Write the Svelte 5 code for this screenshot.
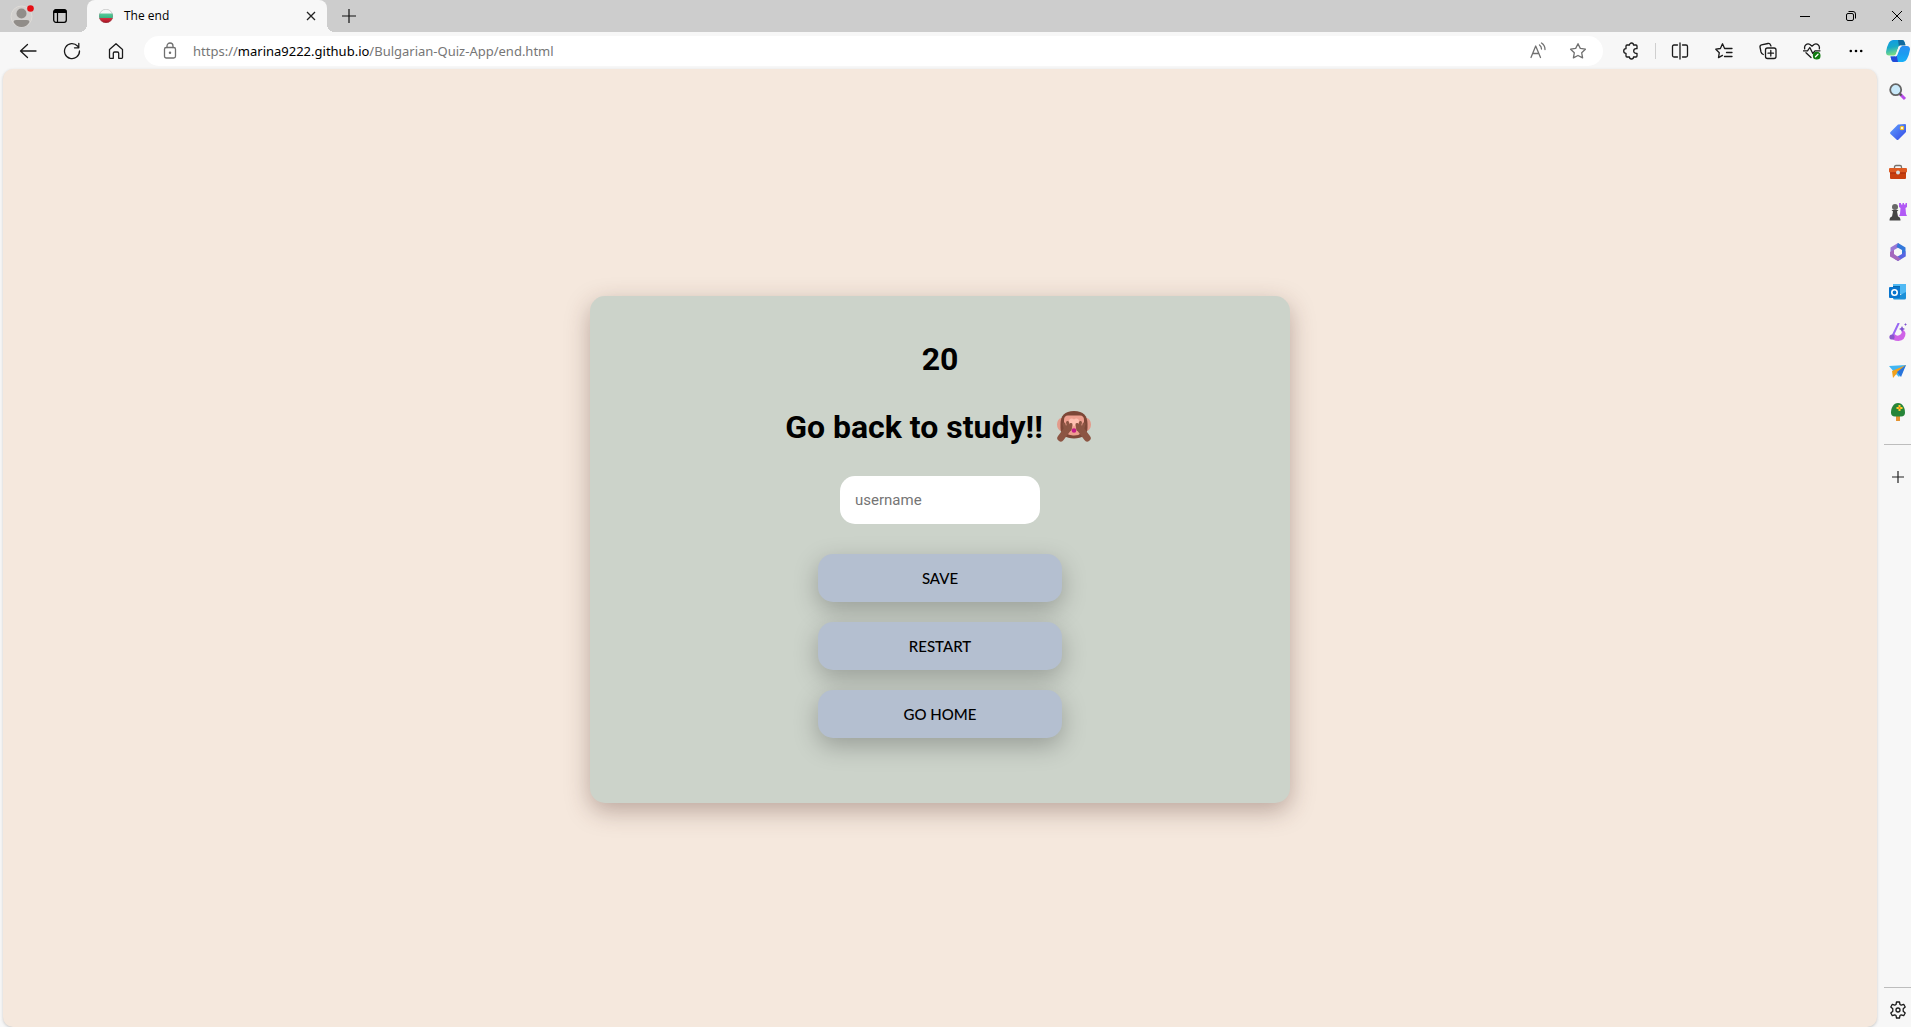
<script>
  let username = $state('');
  const actions = ['SAVE', 'RESTART', 'GO HOME'];
</script>

<svelte:head><title>The end</title></svelte:head>

<div class="browser">
  <header class="tabs">
    <button class="tool profile" aria-label="Profile">
      <svg width="24" height="26" viewBox="0 0 24 26">
        <circle cx="11.500" cy="13.500" r="10.500" fill="#d2d0ce" stroke="#dedbd7" />
        <circle cx="11.500" cy="10.500" r="5" fill="#918d89" />
        <path d="M3.500 19q0-2 2.500-2h11q2.500 0 2.500 2c-1.500 3-4.500 5-8 5s-6.500-2-8-5z" fill="#918d89" />
        <circle cx="20.500" cy="5.500" r="3.300" fill="#e60e14" />
      </svg>
    </button>
    <button class="tool workspace" aria-label="Tab actions">
      <svg width="16" height="16" viewBox="0 0 16 16">
        <rect x="1.700" y="1.700" width="12.600" height="12.600" rx="2.200" fill="none" stroke="#000" stroke-width="1.300" />
        <path d="M1.500 5V3.500a2 2 0 0 1 2-2h9a2 2 0 0 1 2 2V5z" />
        <path d="M5.500 5v9" stroke="#000" stroke-width="1.200" />
      </svg>
    </button>
    <div class="tab">
      <svg width="14" height="14" viewBox="0 0 14 14">
        <defs><clipPath id="ball"><circle cx="7" cy="7" r="7" /></clipPath>
          <linearGradient id="gloss" x2="0" y2="1"><stop stop-color="#fff" stop-opacity=".5" /><stop offset=".5" stop-color="#fff" stop-opacity=".2" /><stop offset="1" stop-opacity=".25" /></linearGradient></defs>
        <g clip-path="url(#ball)">
          <rect width="14" height="5" fill="#f2f2f2" /><rect y="4.500" width="14" height="5" fill="#18b070" /><rect y="9" width="14" height="5" fill="#dc1024" />
          <rect width="14" height="14" fill="url(#gloss)" />
        </g>
        <circle cx="7" cy="7" r="6.700" fill="none" stroke="#777" stroke-opacity=".5" stroke-width=".6" />
      </svg>
      <span class="tab-title">The end</span>
      <button class="tab-close" aria-label="Close tab">
        <svg width="10" height="10" viewBox="0 0 10 10"><path d="M1 1l8 8M9 1L1 9" fill="none" stroke="#222" stroke-width="1.300" /></svg>
      </button>
    </div>
    <button class="tool newtab" aria-label="New tab">
      <svg width="14" height="14" viewBox="0 0 14 14"><path d="M7 0v14M0 7h14" stroke="#111" fill="none" stroke-width="1.200" /></svg>
    </button>
    <div class="window-controls">
      <button aria-label="Minimize"><svg width="10" height="10" viewBox="0 0 10 10"><path d="M0 5.500h10" stroke="#000" /></svg></button>
      <button aria-label="Restore"><svg width="10" height="10" viewBox="0 0 10 10"><rect x=".5" y="2.500" width="7" height="7" rx="1.500" fill="none" stroke="#000" /><path d="M2.500.5H7a2.500 2.500 0 0 1 2.500 2.500v4.500" fill="none" stroke="#000" /></svg></button>
      <button class="last" aria-label="Close"><svg width="10" height="10" viewBox="0 0 10 10"><path d="M0 0l10 10M10 0L0 10" stroke="#000" /></svg></button>
    </div>
  </header>

  <nav class="toolbar" aria-label="Browser toolbar">
    <button class="tool" aria-label="Back"><svg class="line" width="18" height="18" viewBox="0 0 18 18"><path d="M17 9H1.500M8.500 2.500L1.500 9l7 6.500" /></svg></button>
    <button class="tool" aria-label="Refresh"><svg class="line" width="18" height="18" viewBox="0 0 18 18"><path d="M16.500 9A7.500 7.500 0 1 1 14.500 4L15.500 5.500M15.800 1.500v4.300h-4.300" /></svg></button>
    <button class="tool" aria-label="Home"><svg class="line" width="18" height="18" viewBox="0 0 18 18"><path d="M2.500 7.500L9 1.800l6.500 5.700v8q0 .8-.8.8h-3v-5q0-1.300-1.300-1.300H7.600q-1.300 0-1.300 1.300v5h-3q-.8 0-.8-.8z" /></svg></button>
    <div class="address">
      <svg class="line lock" width="14" height="18" viewBox="0 0 14 18"><rect x="1.500" y="5.500" width="11" height="10.500" rx="1.800" /><path d="M4 5.500V4a3 3 0 0 1 6 0v1.500" /><circle cx="7" cy="10.800" r=".6" /></svg>
      <div class="url"><span>https://</span><strong>marina9222.github.io</strong><span>/Bulgarian-Quiz-App/end.html</span></div>
      <button class="read" aria-label="Read aloud"><svg class="line" width="18" height="18" viewBox="0 0 18 18"><path d="M2 15.500L6.700 4l4.800 11.500M3.700 11.500h6M10.500 3q2 1.500 2 4M12.500 1q3.500 2.200 3.500 6.500" /></svg></button>
      <button class="star" aria-label="Add to favorites"><svg class="line" width="18" height="18" viewBox="0 0 18 18"><path d="M9 1.700l2.300 4.700 5.100.8-3.700 3.600.9 5.100L9 13.500l-4.600 2.400.9-5.100-3.700-3.600 5.100-.8z" /></svg></button>
    </div>
    <button class="tool" aria-label="Extensions"><svg class="line" width="18" height="18" viewBox="0 0 18 18"><path d="M5 3h2.500a2 2 0 0 1 4 0H14q1 0 1 1v2.700h-1a2.300 2.300 0 0 0 0 4.600h1V14q0 1-1 1h-2.500a2 2 0 0 1-4 0H5q-1 0-1-1v-2.700a2.300 2.300 0 0 1 0-4.600V4q0-1 1-1z" /></svg></button>
    <span class="divider"></span>
    <button class="tool" aria-label="Split screen"><svg class="line" width="18" height="18" viewBox="0 0 18 18"><path d="M6.500 3H3Q1.500 3 1.500 4.500v9Q1.500 15 3 15h3.500M11.500 3H15q1.500 0 1.500 1.500v9q0 1.500-1.500 1.500h-3.500M9 1v16" /></svg></button>
    <button class="tool" aria-label="Favorites"><svg class="line" width="18" height="18" viewBox="0 0 18 18"><path d="M11 6.500H9.600L7.500 1.800 5.400 6.500l-4.600.7 3.500 3.500-.8 4.900 4-2.200M11 6.500h6M11.500 10.500H17M9.500 14.500H17" /></svg></button>
    <button class="tool" aria-label="Collections"><svg class="line" width="18" height="18" viewBox="0 0 18 18"><rect x="6.500" y="6" width="10.500" height="10.500" rx="2" /><path d="M11.800 8.500v5.500M9 11.200h5.500M4.300 12.500Q2.500 11.800 2 10L1 5Q.7 3.200 2.500 2.800L9 1.500q2-.3 2.500 1.600L12 4" /></svg></button>
    <button class="tool" aria-label="Browser essentials"><svg class="line" width="18" height="18" viewBox="0 0 18 18"><path d="M1.700 6.800C.9 3.500 4 .8 7 2.500l2 1.700 2-1.700c3-1.700 6.100 1 5.300 4.300M3 10.800L8 15.500M.5 8.800h4L6.800 5.500l3 6L12 8.800h5" /><circle class="ok" cx="13.700" cy="13.700" r="3.200" /><path class="tick" d="M12.500 14.700l2.500-2.500" /></svg></button>
    <button class="tool" aria-label="More"><svg width="14" height="4" viewBox="0 0 14 4"><circle cx="1.800" cy="2" r="1.300" /><circle cx="7" cy="2" r="1.300" /><circle cx="12.200" cy="2" r="1.300" /></svg></button>
    <button class="copilot" aria-label="Copilot">
      <svg width="24" height="24" viewBox="0 0 24 24">
        <defs><linearGradient id="cpa" x2=".3" y2="1"><stop stop-color="#1199e8" /><stop offset=".5" stop-color="#18a9c9" /><stop offset="1" stop-color="#7ee080" /></linearGradient><linearGradient id="cpb" x2="0" y2="1"><stop stop-color="#2a8ff5" /><stop offset=".5" stop-color="#1a9cf0" /><stop offset="1" stop-color="#18b0f8" /></linearGradient></defs>
        <path d="M7 1h9q2 0 2.500 2L19.500 6H15q-2 0-2.500 2L10 15q-.5 1.500-2 1.500H3Q0 16.500 0 13 1 7 3 3.500 4.500 1 7 1z" fill="url(#cpa)" />
        <path d="M12 1h4q2 0 2.500 2l1 3.500H15q-1.500 0-2 1.500z" fill="#126a9e" />
        <path d="M17 23H8q-2 0-2.500-2L4.500 17.500H8q2 0 2.500-2L14 9q.5-2 2.500-2H21q3 0 3 3.500-1 6-3 9.500-1.500 3-4 3z" fill="url(#cpb)" />
        <path d="M12 23H8q-2 0-2.500-2L4.500 17.500H8q2 0 2.500-2z" fill="#2348d8" />
        <path d="M12.700 7.500q.5-1 1.800-1L16 7q-1.500.3-2 2l-2.500 6.500q-.7 2-2 2L8 16.700q1.500-.2 2-1.700z" fill="#f7f7f7" />
      </svg>
    </button>
  </nav>

  <div class="body">
    <main>
      <section class="card">
        <h1>20</h1>
        <h1>Go back to study!!
          <svg class="monkey" width="34" height="32" viewBox="0 0 34 32" role="img" aria-label="See-no-evil monkey">
            <ellipse cx="4.500" cy="13.500" rx="4.500" ry="6.500" fill="#e39b8b" /><ellipse cx="29.500" cy="13.500" rx="4.500" ry="6.500" fill="#e39b8b" />
            <path d="M17 0C7.500 0 3.500 5 3.500 13v4C3.500 24 9 27.500 17 27.500S30.500 24 30.500 17v-4C30.500 5 26.500 0 17 0z" fill="#7d4737" />
            <path d="M11 4.500h12q4 0 4 4.500v3q0 3-3 4.500V22q-2 2.500-7 2.500S10 24 10 22v-5.500Q7 15 7 12V9q0-4.500 4-4.500z" fill="#ee9f8f" />
            <path d="M17 8.500c-2-2-5-1-5 1.500 0 3 4 3 5 6 1-3 5-3 5-6 0-2.500-3-3.500-5-1.500z" fill="#ffc0b1" />
            <circle cx="17" cy="19.500" r="2.300" fill="#c51b87" />
            <path d="M3.800 27L11 17.500M30.200 27L23 17.500" fill="none" stroke="#8c5543" stroke-width="7" stroke-linecap="round" />
            <path d="M7 13l1.500 6M10.500 11.500l1.500 6M14 13.500l-1 5M27 13l-1.500 6M23.500 11.500l-1.500 6M20 13.500l1 5" fill="none" stroke="#8c5543" stroke-width="3" stroke-linecap="round" />
          </svg>
        </h1>
        <form onsubmit={(e) => e.preventDefault()}>
          <input type="text" aria-label="username" placeholder="username" bind:value={username} />
          {#each actions as action}
            <button class="action" type="button">{action}</button>
          {/each}
        </form>
      </section>
    </main>

    <aside aria-label="Sidebar">
      <button aria-label="Search"><svg width="18" height="18" viewBox="0 0 18 18"><path d="M11 11l5 5" stroke="#b74bea" stroke-width="3" /><path d="M10 10l2.500 2.500" stroke="#555" stroke-width="2" /><circle cx="6.700" cy="6.700" r="5.500" fill="#c9e9fa" stroke="#646464" stroke-width="1.800" /></svg></button>
      <button aria-label="Shopping"><svg width="18" height="18" viewBox="0 0 18 18"><defs><linearGradient id="tg" x2="1" y2="1"><stop stop-color="#62a2ff" /><stop offset="1" stop-color="#3448e5" /></linearGradient></defs><path d="M9 1.500L16 1q1 0 1 1v7l-7.500 7.500q-1 1-2 0L1.500 11q-1-1 0-2z" fill="url(#tg)" /><circle cx="13" cy="5" r="1.700" fill="#fff" stroke="#f5c12a" stroke-width="1.200" /></svg></button>
      <button aria-label="Tools"><svg width="18" height="18" viewBox="0 0 18 18"><path d="M5.500 6V4q0-1.500 1.500-1.500h4q1.500 0 1.500 1.500v2" fill="none" stroke="#77716c" stroke-width="1.300" /><rect x="1" y="5" width="16" height="11" rx="1" fill="#c8400f" /><rect y="5" width="18" height="4.500" rx="1" fill="#dd5a22" /><path d="M1 10h16" stroke="#a62b0c" /><circle cx="9" cy="9.500" r="2" fill="#d8e1e2" /></svg></button>
      <button aria-label="Games"><svg width="18" height="18" viewBox="0 0 18 18"><path d="M10 0h2v1.500h1.500V0H15v1.500h1.500V0H18v4l-1.500 1 .5 6 1 2h-8l1-2 .5-6L10 4z" fill="#b15af5" /><circle cx="6" cy="4" r="3" fill="#686868" /><path d="M2.500 7h7L8 8.500l1 5q2.500.5 2.500 4H.5q0-3.500 2.500-4l1-5z" fill="#454545" /></svg></button>
      <button aria-label="Microsoft 365"><svg width="18" height="18" viewBox="0 0 18 18"><path d="M9 0L1.500 4.500v8L5 11V7l7-4z" fill="#9a79d5" /><path d="M9 0l7.500 4.500v9L13 11V7L7.500 4z" fill="#3478da" /><path d="M16.500 8v5.500L9 18l-4-2.500 8-4.500z" fill="#5964e1" /><path d="M1 9v4.500L9 18l3-2-7-5V7z" fill="#a467bd" /></svg></button>
      <button aria-label="Outlook"><svg width="18" height="18" viewBox="0 0 18 18"><path d="M4 1h13v10H4z" fill="#50b9f4" /><path d="M4 3h7v6H4z" fill="#0869ad" /><path d="M4 10l7 2 6-3v6q0 1.500-1.500 1.500h-10Q4 16.500 4 15z" fill="#1c90d8" /><rect x="0" y="4" width="11" height="11" rx="1" fill="#0875ce" /><circle cx="5.500" cy="9.500" r="2.700" fill="none" stroke="#fff" stroke-width="1.600" /></svg></button>
      <button aria-label="Designer"><svg width="18" height="18" viewBox="0 0 18 18"><path d="M5.500 11q3 3 6 .5Q14 9 12 6q4 1 4.500 4.500Q16.500 17 9.500 18 3 18 1 13z" fill="#cf63e7" /><path d="M9.500.5L4 12" stroke="#9868f3" stroke-width="2" stroke-linecap="round" /><circle cx="3" cy="14" r="2.600" fill="#8956cb" /><path d="M13 3l1 2 2 1-2 1-1 2-1-2-2-1 2-1zM16.500 0l.5 1 1 .5-1 .5-.5 1-.5-1-1-.5 1-.5z" fill="#8052cf" /></svg></button>
      <button aria-label="Drop"><svg width="18" height="18" viewBox="0 0 18 18"><path d="M0 3l17-1-7 12-4-4z" fill="#41b6f3" /><path d="M3 8l14-6-8 7-5 6z" fill="#f2a11d" /><path d="M17 2l-5 12-4-5z" fill="#2874db" /></svg></button>
      <button aria-label="Tree"><svg width="18" height="18" viewBox="0 0 18 18"><rect x="7" y="12" width="4" height="6" rx=".5" fill="#e49231" /><path d="M9 0C4.500 0 2 5 2 9.500q0 4 4 4h6q4 0 4-4C16 5 13.500 0 9 0z" fill="#268539" /><path d="M10.500 2v6M7.500 5h6" stroke="#ffcf2c" stroke-width="2" /><circle cx="10.500" cy="5" r="1" fill="#e27017" /></svg></button>
      <hr />
      <button class="add" aria-label="Customize sidebar"><svg width="12" height="12" viewBox="0 0 12 12"><path d="M6 0v12M0 6h12" stroke="#222" stroke-width="1.200" /></svg></button>
      <hr class="bottom-rule" />
      <button class="settings" aria-label="Settings"><svg class="line" width="18" height="18" viewBox="0 0 18 18"><path d="M7.500 1h3l.5 2.500 1.200.7 2.500-.9 1.500 2.700-2 1.700v2.600l2 1.700-1.500 2.700-2.500-.9-1.200.7-.5 2.500h-3L7 14.500l-1.200-.7-2.500.9L1.800 12l2-1.700V7.700L1.800 6l1.500-2.700 2.500.9L7 3.500z" /><circle cx="9" cy="9" r="2" /></svg></button>
    </aside>
  </div>
</div>

<style>
  :global(body) { margin: 0; }
  * { box-sizing: border-box; }
  button { border: 0; padding: 0; background: none; font: inherit; color: inherit; cursor: pointer; }
  svg { display: block; flex: none; }
  .browser {
    min-height: 100vh; display: flex; flex-direction: column;
    background: #f7f7f7; color: #000; font-family: "Open Sans", "Noto Sans", sans-serif;
  }
  .tabs { height: 32px; display: flex; align-items: center; background: #cdcdcd; }
  .tool { width: 44px; height: 30px; flex: none; display: flex; align-items: center; justify-content: center; }
  .workspace { width: 32px; margin-right: 11px; }
  .tab {
    width: 240px; height: 32px; padding: 0 10px 0 12px; display: flex; align-items: center; gap: 11px;
    background: #f7f7f7; border-radius: 8px 8px 0 0; position: relative;
  }
  .tab::before, .tab::after { content: ""; position: absolute; bottom: 0; width: 8px; height: 8px; }
  .tab::before { left: -8px; background: radial-gradient(circle at 0 0, #cdcdcd 8px, #f7f7f7 8px); }
  .tab::after { right: -8px; background: radial-gradient(circle at 100% 0, #cdcdcd 8px, #f7f7f7 8px); }
  .tab-title { flex: 1; font-size: 12px; line-height: 16px; }
  .tab-close { width: 12px; height: 16px; display: flex; align-items: center; justify-content: center; }
  .newtab { width: 43px; }
  .window-controls { display: flex; margin-left: auto; }
  .window-controls button { width: 46px; height: 32px; display: flex; align-items: center; justify-content: center; }
  .window-controls .last { width: 37px; padding-left: 9px; }
  .toolbar { height: 37px; padding-left: 6px; display: flex; align-items: center; }
  .line { fill: none; stroke: #1b1b1b; stroke-width: 1.3px; stroke-linejoin: round; stroke-linecap: round; }
  .ok { fill: #107c10; stroke: #107c10; }
  .tick { stroke: #fff; }
  .address {
    flex: 1; height: 30px; margin: 0 6px; padding: 0 16px 0 19px; display: flex; align-items: center;
    background: #fff; border-radius: 15px;
  }
  .address .line { stroke: #707070; }
  .url { flex: 1; margin-left: 16px; font-family: "Noto Sans", sans-serif; font-size: 13px; line-height: 20px; color: #767676; }
  .url strong { font-weight: 400; color: #000; }
  .read { margin-right: 22px; }
  .divider { width: 1px; height: 16px; margin: 0 2px; background: #cfcfcf; }
  .copilot { width: 27px; margin-left: 6px; display: flex; justify-content: center; }
  .body { flex: 1; display: flex; }
  main {
    flex: 1; margin-left: 3px; padding: 26px 24px 24px; display: flex; align-items: center; justify-content: center;
    background: #f5e8dd; border-radius: 10px; box-shadow: 0 1px 3px #c8c8c8; font-family: Roboto, sans-serif;
  }
  .card {
    width: 700px; max-width: 100%; padding: 44px 24px 65px; text-align: center;
    background: #ccd3ca; border-radius: 15px;
    box-shadow: 0 8px 24px rgba(75, 40, 35, 0.34);
  }
  h1 { margin: 0 0 30px; display: flex; align-items: center; justify-content: center; gap: 14px; font-size: 32px; line-height: 38px; font-weight: 700; }
  .monkey { margin-right: 4px; }
  form { margin: 0; display: flex; flex-direction: column; align-items: center; gap: 20px; }
  input {
    width: 200px; height: 48px; margin-bottom: 10px; padding: 0 15px; border: 0; border-radius: 15px;
    background: #fff; font-family: Roboto, sans-serif; font-size: 15px; color: #000;
  }
  input::placeholder { color: #757575; opacity: 1; }
  .action {
    width: 244px; height: 48px; border-radius: 15px; background: #b4bfd0;
    box-shadow: 0 8px 24px rgba(0, 0, 0, 0.25);
    font-family: Lato, sans-serif; font-size: 15px; font-weight: 500;
  }
  aside { width: 27px; margin-left: 7px; padding-top: 3px; flex: none; display: flex; flex-direction: column; align-items: center; }
  aside button { height: 40px; width: 27px; flex: none; display: flex; align-items: center; justify-content: center; }
  hr { width: 100%; height: 1px; margin: 12px 0; border: 0; background: #bdbdbd; flex: none; }
  .bottom-rule { margin: auto 0 5px; }
  aside .settings { height: 34px; }
</style>
